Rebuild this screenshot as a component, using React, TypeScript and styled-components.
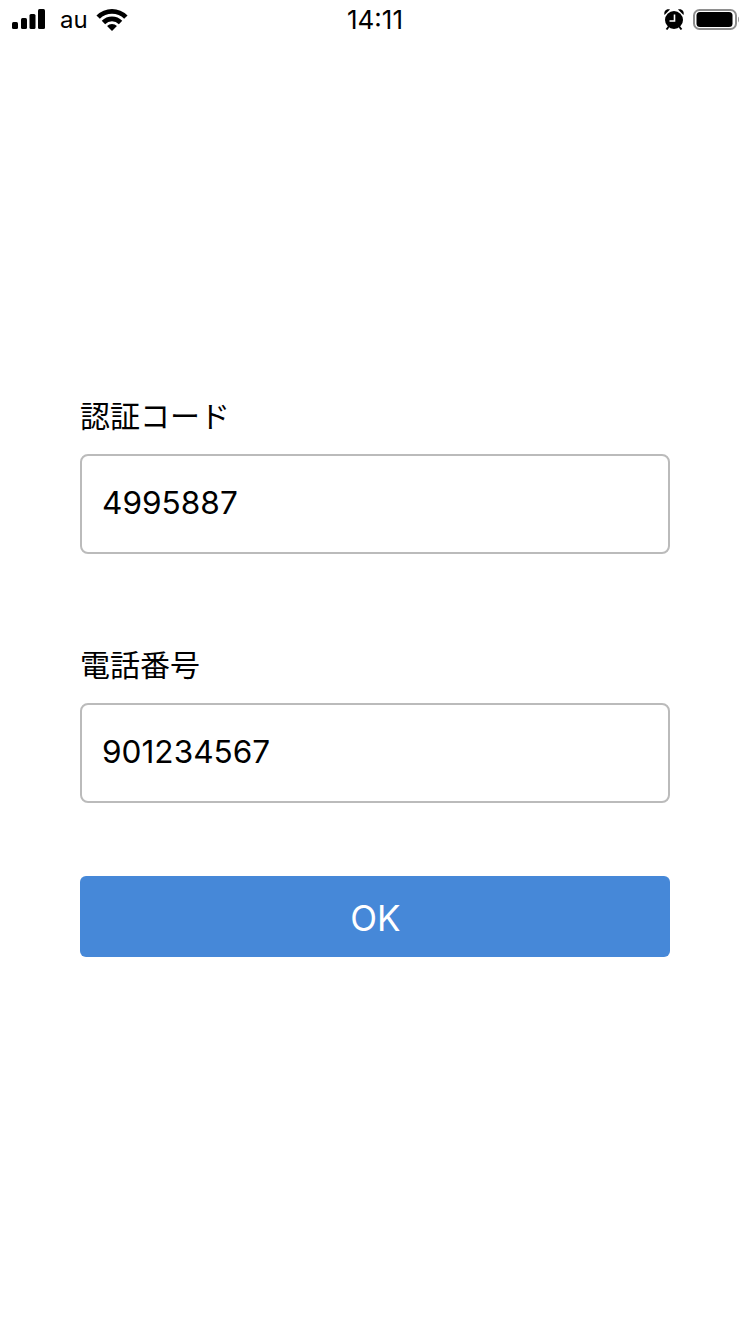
import React from 'react';
import styled, { createGlobalStyle } from 'styled-components';

const GlobalStyle = createGlobalStyle`
  html, body {
    margin: 0;
    padding: 0;
    background: #fff;
  }
`;

const Page = styled.div`
  width: 750px;
  height: 1334px;
  overflow: hidden;
  font-family: 'Liberation Sans', 'Noto Sans CJK JP', sans-serif;
  color: #000;
`;

const StatusBar = styled.div`
  height: 40px;
  display: grid;
  grid-template-columns: 1fr auto 1fr;
  align-items: center;
`;

const StatusLeft = styled.div`
  display: flex;
  align-items: center;
  padding-left: 12px;
`;

const Carrier = styled.span`
  font-family: Inter, 'Liberation Sans', sans-serif;
  font-size: 24px;
  line-height: 40px;
  margin-left: 14px;
  margin-right: 8px;
`;

const Clock = styled.span`
  font-family: Inter, 'Liberation Sans', sans-serif;
  font-size: 26px;
  font-weight: 400;
  line-height: 40px;
`;

const StatusRight = styled.div`
  display: flex;
  align-items: center;
  justify-content: flex-end;
  padding-right: 11px;
  gap: 8px;
`;

const Form = styled.form`
  display: flex;
  flex-direction: column;
  padding: 355px 80px 0;
`;

const Field = styled.div`
  display: flex;
  flex-direction: column;
  margin-bottom: 90px;

  &:last-of-type {
    margin-bottom: 73px;
  }
`;

const Label = styled.label`
  font-size: 30px;
  line-height: 44px;
  height: 44px;
  margin-bottom: 15px;
`;

const ValueBox = styled.div`
  box-sizing: border-box;
  height: 100px;
  border: 2px solid #bbb;
  border-radius: 8px;
  padding: 0 20px 3px;
  display: flex;
  align-items: center;
  font-family: Inter, 'Liberation Sans', sans-serif;
  font-size: 31.6px;
`;

const OkButton = styled.button`
  height: 81px;
  border: none;
  border-radius: 6px;
  background: #4688d8;
  color: #fff;
  font-family: Inter, 'Liberation Sans', sans-serif;
  font-size: 35px;
  padding: 2px 0 0 1px;
`;

const SignalIcon = () => (
  <svg width="34" height="22" viewBox="0 0 34 22">
    <rect x="0" y="13" width="6" height="7" rx="1.5" fill="#000" />
    <rect x="9" y="9" width="6" height="11" rx="1.5" fill="#000" />
    <rect x="17.5" y="5" width="6" height="15" rx="1.5" fill="#000" />
    <rect x="26" y="0" width="7" height="20" rx="1.5" fill="#000" />
  </svg>
);

const WifiIcon = () => (
  <svg width="32" height="24" viewBox="0 0 32 24">
    <path d="M0.44 7.44A22 22 0 0 1 31.56 7.44L28.16 10.84A17.2 17.2 0 0 0 3.84 10.84z" fill="#000" />
    <path d="M5.75 12.75A14.5 14.5 0 0 1 26.25 12.75L22.86 16.14A9.7 9.7 0 0 0 9.14 16.14z" fill="#000" />
    <path d="M11.05 18.05A7 7 0 0 1 20.95 18.05L16 23z" fill="#000" />
  </svg>
);

const AlarmIcon = () => (
  <svg width="22" height="24" viewBox="0 0 22 24">
    <circle cx="11" cy="12" r="9" fill="#000" />
    <path d="M11.5 6.5V13H6.5" fill="none" stroke="#fff" strokeWidth="1.6" />
    <path d="M1.5 7C0.5 3.5 3 0.5 7 1.5z" fill="#000" />
    <path d="M20.5 7C21.5 3.5 19 0.5 15 1.5z" fill="#000" />
    <path d="M5.5 19l-2 2.5M16.5 19l2 2.5" stroke="#000" strokeWidth="2" />
  </svg>
);

const BatteryIcon = () => (
  <svg width="46" height="24" viewBox="0 0 46 24">
    <rect x="1" y="2" width="42" height="19" rx="5.5" fill="none" stroke="#8e8e8e" strokeWidth="2" />
    <rect x="3.5" y="4" width="36" height="15" rx="3.5" fill="#000" />
    <path d="M45 8.5c.7.4 1 1.6 1 3s-.3 2.6-1 3z" fill="#999" />
  </svg>
);

export default function App() {
  return (
    <Page>
      <GlobalStyle />
      <StatusBar>
        <StatusLeft>
          <SignalIcon />
          <Carrier>au</Carrier>
          <WifiIcon />
        </StatusLeft>
        <Clock>14:11</Clock>
        <StatusRight>
          <AlarmIcon />
          <BatteryIcon />
        </StatusRight>
      </StatusBar>
      <Form>
        <Field>
          <Label>認証コード</Label>
          <ValueBox>4995887</ValueBox>
        </Field>
        <Field>
          <Label>電話番号</Label>
          <ValueBox>901234567</ValueBox>
        </Field>
        <OkButton type="button">OK</OkButton>
      </Form>
    </Page>
  );
}
